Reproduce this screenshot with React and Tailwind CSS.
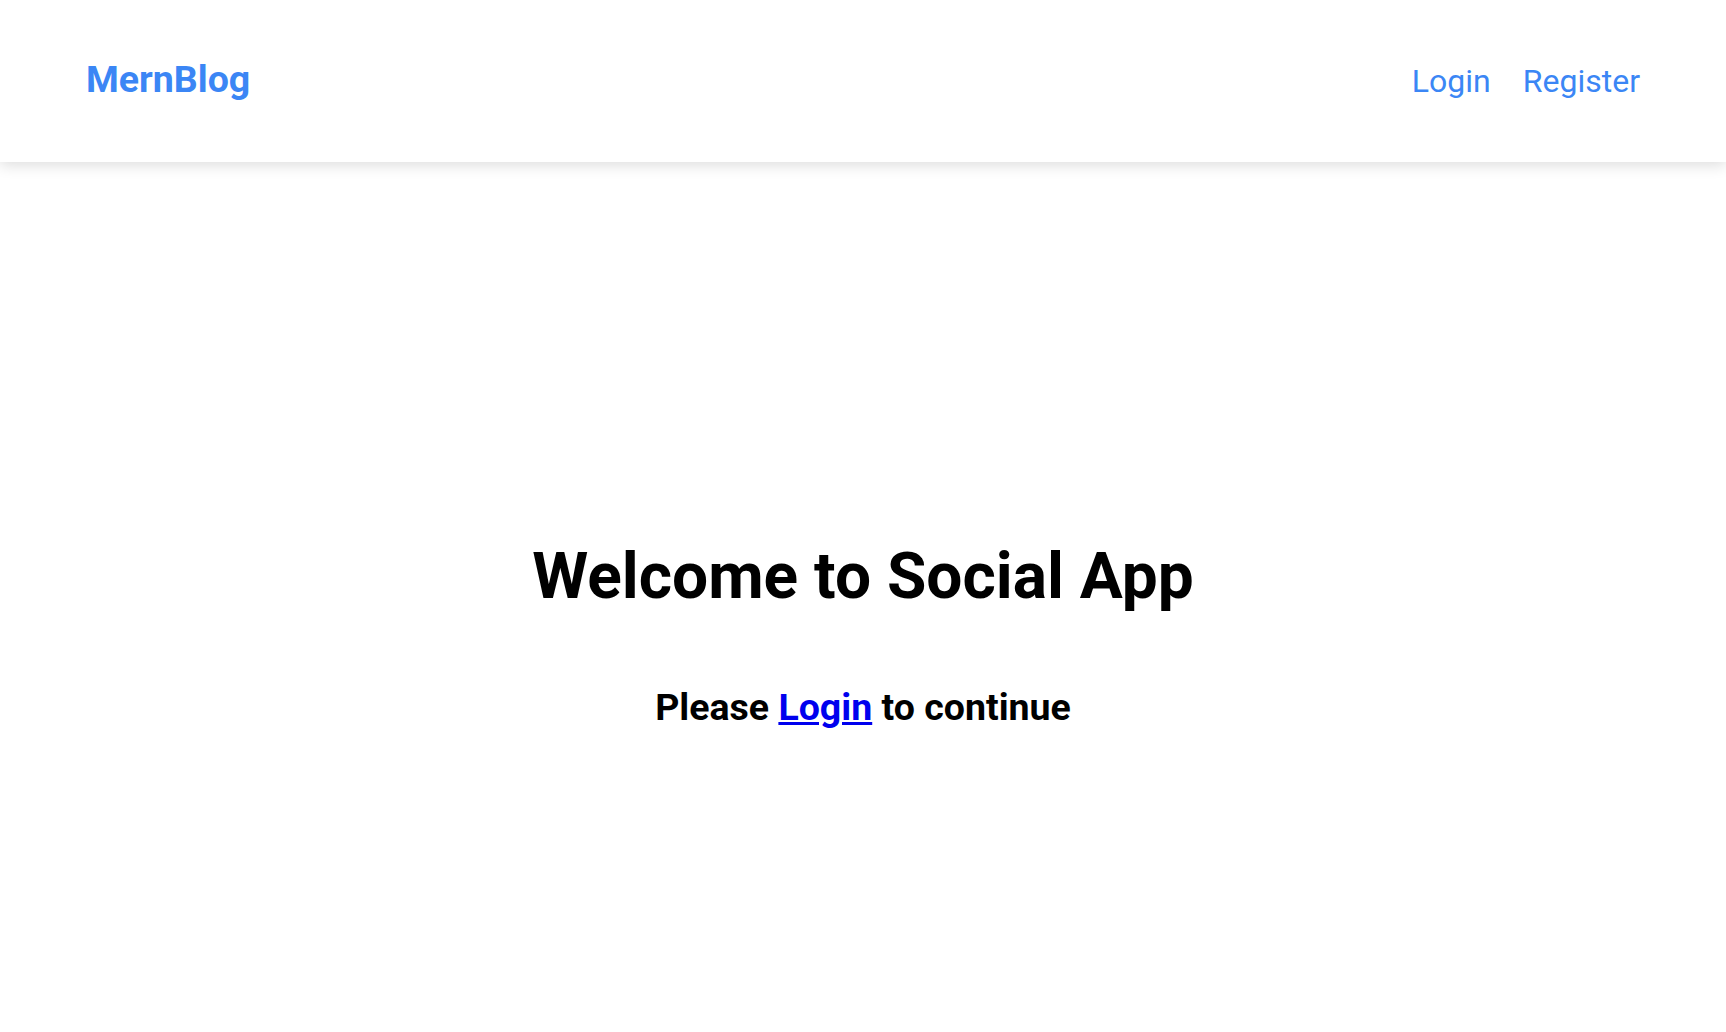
const navLinks = ['Login', 'Register']

function Header() {
  return (
    <header className="relative z-10 flex h-[162px] items-baseline justify-between bg-white px-[86px] pt-[61px] shadow-[0_3px_14px_rgba(0,0,0,0.14)]">
      <a href="#" className="text-[37.5px] font-bold leading-none text-[#3b86f5]">
        MernBlog
      </a>
      <nav className="flex items-baseline gap-[32px]">
        {navLinks.map((link) => (
          <a key={link} href="#" className="text-[32px] leading-none text-[#3b86f5]">
            {link}
          </a>
        ))}
      </nav>
    </header>
  )
}

export default function App() {
  return (
    <div className="min-h-screen bg-white font-['Roboto',sans-serif] text-black">
      <Header />
      <main className="flex flex-col items-center pt-[383px] text-center">
        <h1 className="text-[64px] font-bold leading-none">Welcome to Social App</h1>
        <h2 className="mt-[80px] text-[37.5px] font-bold leading-none">
          Please{' '}
          <a href="#" className="text-[#0000ee] underline">
            Login
          </a>{' '}
          to continue
        </h2>
      </main>
    </div>
  )
}
